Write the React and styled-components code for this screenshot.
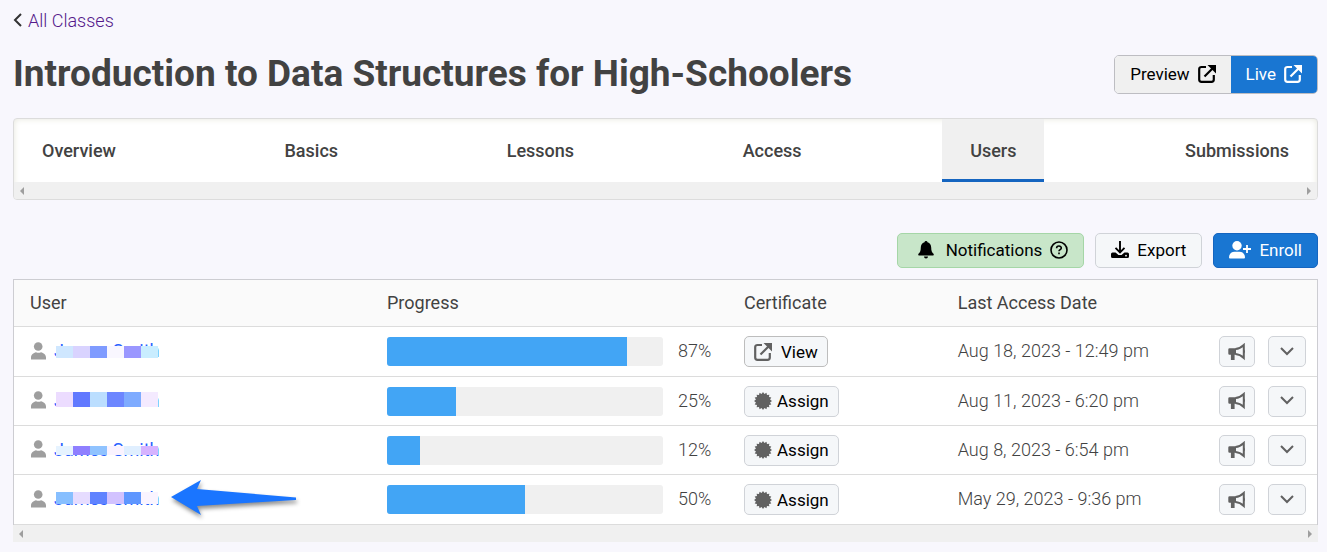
import React from 'react';
import styled, { createGlobalStyle } from 'styled-components';

const GlobalStyle = createGlobalStyle`
  * {
    box-sizing: border-box;
  }
  body {
    margin: 0;
    background: #f8f7fd;
    color: #424242;
    font-family: Roboto, "Liberation Sans", sans-serif;
    font-size: 18px;
    font-weight: 400;
  }
  button {
    font-family: inherit;
    cursor: pointer;
  }
`;

const Page = styled.main`
  padding: 8px 9px 10px 13px;
`;

const BackLink = styled.a`
  display: inline-flex;
  align-items: center;
  gap: 6px;
  height: 24px;
  color: #551a8b;
  font-weight: 300;
  text-decoration: none;
  svg {
    color: #333;
  }
`;

const TitleRow = styled.header`
  display: flex;
  align-items: center;
  justify-content: space-between;
  margin: 22px 0 24px;
`;

const Title = styled.h1`
  margin: 0;
  font-size: 37px;
  font-weight: 700;
  line-height: 40px;
`;

const ButtonGroup = styled.div`
  display: flex;
  height: 39px;
  border: 1px solid #bdbdc2;
  border-radius: 5px;
  overflow: hidden;
`;

const GroupButton = styled.button`
  display: flex;
  align-items: center;
  gap: 8px;
  padding: 0 15px;
  border: 0;
  background: ${props => props.$primary ? '#1976d2' : '#f0f0f0'};
  color: ${props => props.$primary ? '#fff' : '#000'};
  font-size: 17px;
`;

const TabBox = styled.div`
  border: 1px solid #dcdcdc;
  border-radius: 4px;
  background: #fff;
  box-shadow: inset 0 0 6px #e6e6dc;
  overflow: hidden;
`;

const Tabs = styled.nav`
  display: flex;
  justify-content: space-between;
  height: 63px;
`;

const Tab = styled.a`
  display: flex;
  align-items: center;
  padding: 3px 28px 0;
  border-bottom: 3px solid ${props => props.$active ? '#1565c0' : 'transparent'};
  background: ${props => props.$active ? '#f0f0f0' : 'transparent'};
  color: #424242;
  font-weight: 500;
  text-decoration: none;
`;

const ScrollTrack = styled.div`
  display: flex;
  align-items: center;
  justify-content: space-between;
  height: 17px;
  padding: 0 6px;
  background: #f0f0f0;
  color: #9e9e9e;
  svg {
    display: block;
  }
`;

const Toolbar = styled.div`
  display: flex;
  justify-content: flex-end;
  gap: 11px;
  margin: 33px 0 11px;
`;

const tones = {
  success: { bg: '#c8e6c9', border: '#a5d6a7', color: '#000' },
  plain: { bg: '#f5f7f9', border: '#d0d3d8', color: '#000' },
  primary: { bg: '#1976d2', border: '#1565c0', color: '#fff' }
};

const ToolButton = styled.button`
  display: flex;
  align-items: center;
  gap: 8px;
  height: 35px;
  padding: 0 15px 2px;
  border: 1px solid ${props => tones[props.$tone].border};
  border-radius: 5px;
  background: ${props => tones[props.$tone].bg};
  color: ${props => tones[props.$tone].color};
  font-size: 17px;
`;

const Table = styled.table`
  width: 100%;
  table-layout: fixed;
  border-collapse: separate;
  border-spacing: 0;
  border: 1px solid #cdcdd2;
  border-bottom: 0;
  background: #fff;
`;

const Col = styled.col`
  width: ${props => props.$width};
`;

const Th = styled.th`
  height: 47px;
  padding: 0 16px 2px;
  border-bottom: 1px solid #dcdcdc;
  background: #fafafa;
  font-weight: 400;
  text-align: left;
`;

const Row = styled.tr`
  height: 49px;
  &:nth-child(3n + 1) {
    height: 50px;
  }
`;

const Td = styled.td`
  padding: 0 ${props => props.$end ? 11 : 16}px 0 16px;
  border-bottom: 1px solid #dcdcdc;
  vertical-align: middle;
`;

const DateTd = styled(Td)`
  padding: 0 0 2px 16px;
  font-weight: 300;
  white-space: nowrap;
`;

const User = styled.div`
  display: flex;
  align-items: center;
  gap: 8px;
  padding-bottom: 2px;
  color: #9e9e9e;
`;

const NameLink = styled.a`
  position: relative;
  color: #2962ff;
  text-decoration: none;
`;

const Mosaic = styled.span`
  position: absolute;
  top: ${props => props.$top}px;
  left: 2px;
  display: flex;
  height: ${props => props.$height}px;
`;

const Tile = styled.span`
  width: 17px;
  background: ${props => props.$color};
`;

const Pointer = styled.svg`
  position: absolute;
  top: -9px;
  left: 114px;
  filter: drop-shadow(1px 3px 2px rgba(0, 0, 0, 0.45));
`;

const ProgressCell = styled.div`
  display: flex;
  align-items: center;
  gap: 15px;
`;

const Track = styled.div`
  flex: 1;
  height: 29px;
  border-radius: 3px;
  background: #f0f0f0;
  overflow: hidden;
`;

const Fill = styled.div`
  height: 100%;
  background: #42a5f5;
`;

const Percent = styled.span`
  width: 34px;
  padding-bottom: 2px;
  font-weight: 300;
`;

const SmallButton = styled.button`
  display: flex;
  align-items: center;
  justify-content: center;
  gap: ${props => props.$gap || 5}px;
  height: 31px;
  width: ${props => props.$width ? `${props.$width}px` : 'auto'};
  padding: 0 ${props => props.$width ? 0 : 9}px;
  border: 1px solid ${props => props.$strong ? '#bdbdbd' : '#d0d3d8'};
  border-radius: 5px;
  background: #f5f7f9;
  color: #000;
  font-size: 17px;
  svg {
    color: #616161;
  }
`;

const Actions = styled.div`
  display: flex;
  justify-content: flex-end;
  gap: 13px;
`;

const BackIcon = () => (
  <svg width="9" height="14" viewBox="0 0 9 14" fill="none" stroke="currentColor" strokeWidth="2">
    <path d="M8 1 2 7l6 6" />
  </svg>
);

const ExternalIcon = () => (
  <svg width="18" height="18" viewBox="0 0 18 18" fill="none" stroke="currentColor" strokeWidth="2.200">
    <path d="M8 2H3.500Q1.200 2 1.200 4v10.500Q1.200 16.800 3.500 16.800h10q2.300 0 2.300-2.300V10M6.500 11.500 14.500 3.500" />
    <path d="M9.500 0H18v8.500z" fill="currentColor" stroke="none" />
  </svg>
);

const BellIcon = () => (
  <svg width="25" height="18" viewBox="-5 0 25 18" fill="currentColor">
    <path d="M8 0a1.500 1.500 0 0 1 1.500 1.300C12 2 13.200 4 13.200 6.500c0 3.500.8 4.800 2.300 6.200.5.600.3 1.800-.7 1.800H1.200c-1 0-1.200-1.200-.7-1.800C2 11.300 2.800 10 2.800 6.500 2.800 4 4 2 6.500 1.300A1.500 1.500 0 0 1 8 0zM6 15.500h4a2 2 0 0 1-4 0z" />
  </svg>
);

const HelpIcon = () => (
  <svg width="18" height="18" viewBox="0 0 18 18" fill="none" stroke="currentColor" strokeWidth="1.600">
    <circle cx="9" cy="9" r="8" />
    <path d="M6.600 7.200C6.600 4.300 11.400 4.400 11.300 7c0 1.600-2.300 1.700-2.300 3.300M9 11.600v1.700" />
  </svg>
);

const ExportIcon = () => (
  <svg width="18" height="18" viewBox="0 0 18 18">
    <path d="M9 0v11M4.500 6.800 9 11.300l4.500-4.500" fill="none" stroke="currentColor" strokeWidth="1.900" />
    <path d="M1.500 11.500h3L7.500 14h3l3-2.500h3q1.500 0 1.500 1.500v2.500q0 1.500-1.500 1.500h-15Q0 17 0 15.500V13q0-1.500 1.500-1.500z" fill="currentColor" />
    <circle cx="15" cy="14.700" r="0.900" fill="#f5f7f9" />
  </svg>
);

const EnrollIcon = () => (
  <svg width="22" height="18" viewBox="0 0 22 18" fill="currentColor">
    <circle cx="8" cy="4.700" r="4.700" />
    <path d="M0 16.500C0 13 2.500 10.800 5.500 10.800h5c3 0 5.500 2.200 5.500 5.700q0 1-1 1H1q-1 0-1-1z" />
    <path d="M18 4v8M14 8h8" stroke="currentColor" strokeWidth="1.800" />
  </svg>
);

const PersonIcon = () => (
  <svg width="16" height="18" viewBox="-1 0 16 18" fill="currentColor">
    <circle cx="7.200" cy="4.500" r="4.300" />
    <path d="M0 17.500v-2C0 12.500 2.500 11 5 10.300q2.500 1 5 0c2.500.7 5 2.200 5 5.200v2z" />
  </svg>
);

const SealIcon = () => {
  const points = Array.from({ length: 32 }, (_, i) => {
    const r = i % 2 ? 7.2 : 9;
    const a = (i * Math.PI) / 16;
    return `${9 + r * Math.sin(a)},${9 - r * Math.cos(a)}`;
  }).join(' ');
  return (
    <svg width="18" height="18" viewBox="0 0 18 18" fill="currentColor">
      <polygon points={points} />
    </svg>
  );
};

const MegaphoneIcon = () => (
  <svg width="18" height="18" viewBox="0 0 18 18">
    <path d="M1.500 5.200H8v6.600H6.600V17H2.900v-5.200H1.500Q.3 11.800.3 10.600V6.400q0-1.200 1.200-1.200z" fill="currentColor" />
    <path d="M7.500 6Q12 5.700 15.800 2v13Q12 11.300 7.500 11" fill="none" stroke="currentColor" strokeWidth="2" />
    <path d="M16 6.500q2 2 0 4z" fill="currentColor" />
  </svg>
);

const ChevronIcon = () => (
  <svg width="14" height="12" viewBox="0 0 14 12" fill="none" stroke="currentColor" strokeWidth="2">
    <path d="m1 2 6 6 6-6" />
  </svg>
);

const ScrollBar = () => (
  <ScrollTrack aria-hidden="true">
    <svg width="4" height="8" viewBox="0 0 4 8" fill="currentColor"><path d="M4 0v8L0 4z" /></svg>
    <svg width="4" height="8" viewBox="0 0 4 8" fill="currentColor"><path d="M0 0v8l4-4z" /></svg>
  </ScrollTrack>
);

const tabs = ['Overview', 'Basics', 'Lessons', 'Access', 'Users', 'Submissions'];

const users = [
  {
    progress: 87,
    certified: true,
    date: 'Aug 18, 2023 - 12:49 pm',
    mask: { top: 6, height: 12, colors: ['#cfe7ff', '#d9d3ff', '#7f9bff', '#f9f7ff', '#9a97ff', '#c9edff'] }
  },
  {
    progress: 25,
    date: 'Aug 11, 2023 - 6:20 pm',
    mask: { top: 2, height: 15, colors: ['#ecdcff', '#6179ff', '#bbdeff', '#6c86ff', '#7eabff', '#f4eaff'] }
  },
  {
    progress: 12,
    date: 'Aug 8, 2023 - 6:54 pm',
    mask: { top: 7, height: 9, colors: ['#e6f3ff', '#8f7fff', '#90c3ff', '#faf3ff', '#e0efff', '#d6b3ff'] }
  },
  {
    progress: 50,
    date: 'May 29, 2023 - 9:36 pm',
    mask: { top: 4, height: 12, colors: ['#87bfff', '#e6dcff', '#6083ff', '#d2c2ff', '#5f97ff', '#faf4ff'] },
    pointed: true
  }
];

const UserRow = ({ user }) => (
  <Row>
    <Td>
      <User>
        <PersonIcon />
        <NameLink href="#user">
          James Smith
          <Mosaic $top={user.mask.top} $height={user.mask.height}>
            {user.mask.colors.map(color => <Tile key={color} $color={color} />)}
          </Mosaic>
          {user.pointed && (
            <Pointer width="130" height="40" viewBox="0 0 130 40" fill="#1a75ff">
              <path d="M3 18 33 1l-4 9 99 8.500v2.500L29 27l4 9z" />
            </Pointer>
          )}
        </NameLink>
      </User>
    </Td>
    <Td>
      <ProgressCell>
        <Track role="progressbar" aria-label="Progress" aria-valuenow={user.progress}>
          <Fill style={{ width: `${user.progress}%` }} />
        </Track>
        <Percent>{user.progress}%</Percent>
      </ProgressCell>
    </Td>
    <Td>
      {user.certified
        ? <SmallButton $strong $gap={9}><ExternalIcon />View</SmallButton>
        : <SmallButton><SealIcon />Assign</SmallButton>}
    </Td>
    <DateTd>{user.date}</DateTd>
    <Td $end>
      <Actions>
        <SmallButton $width={36} aria-label="Announce"><MegaphoneIcon /></SmallButton>
        <SmallButton $width={38} aria-label="More"><ChevronIcon /></SmallButton>
      </Actions>
    </Td>
  </Row>
);

const App = () => (
  <Page>
    <GlobalStyle />
    <BackLink href="#classes"><BackIcon />All Classes</BackLink>
    <TitleRow>
      <Title>Introduction to Data Structures for High-Schoolers</Title>
      <ButtonGroup>
        <GroupButton>Preview <ExternalIcon /></GroupButton>
        <GroupButton $primary>Live <ExternalIcon /></GroupButton>
      </ButtonGroup>
    </TitleRow>
    <TabBox>
      <Tabs>
        {tabs.map(name => (
          <Tab key={name} href={`#${name.toLowerCase()}`} $active={name === 'Users'}>{name}</Tab>
        ))}
      </Tabs>
      <ScrollBar />
    </TabBox>
    <Toolbar>
      <ToolButton $tone="success"><BellIcon />Notifications<HelpIcon /></ToolButton>
      <ToolButton $tone="plain"><ExportIcon />Export</ToolButton>
      <ToolButton $tone="primary"><EnrollIcon />Enroll</ToolButton>
    </Toolbar>
    <Table>
      <colgroup>
        <Col $width="27.4%" />
        <Col $width="27.4%" />
        <Col $width="16.4%" />
        <Col $width="16.4%" />
        <Col $width="12.4%" />
      </colgroup>
      <thead>
        <tr>
          <Th>User</Th>
          <Th>Progress</Th>
          <Th>Certificate</Th>
          <Th>Last Access Date</Th>
          <Th aria-label="Actions" />
        </tr>
      </thead>
      <tbody>
        {users.map(user => <UserRow key={user.date} user={user} />)}
      </tbody>
    </Table>
    <ScrollBar />
  </Page>
);

export default App;
